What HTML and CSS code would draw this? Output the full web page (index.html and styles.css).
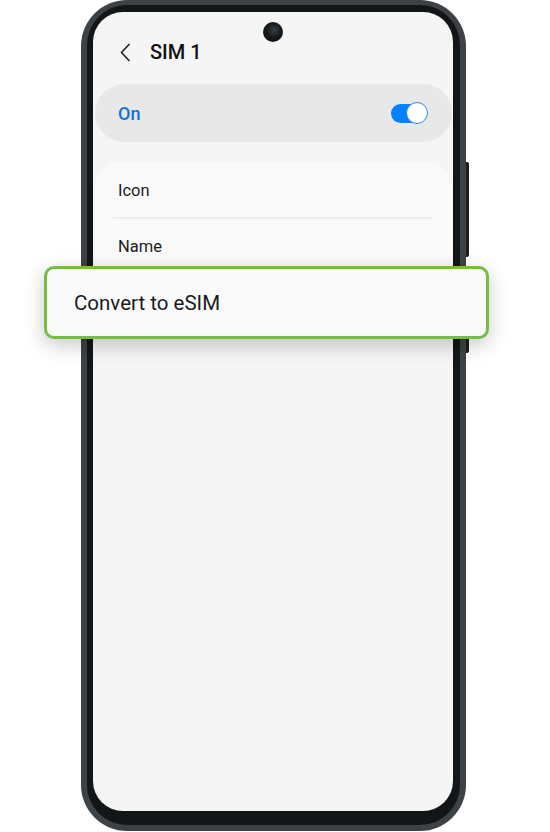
FILE: index.html
```html
<!DOCTYPE html>
<html lang="en">
  <head>
    <meta charset="utf-8">
    <title>SIM 1</title>
    <link rel="stylesheet" href="styles.css">
  </head>
  <body>
    <div class="stage">
      <div class="phone">
        <span class="key key-volume"></span>
        <span class="key key-power"></span>
        <div class="bezel">
          <div class="screen">
            <span class="camera"></span>

            <div class="header">
              <svg class="back" width="12" height="19" viewBox="0 0 12 19">
                <path d="M10 1.5 L2.5 9.5 L10 17.5" fill="none" stroke="#222" stroke-width="1.7" stroke-linecap="round" stroke-linejoin="round"/>
              </svg>
              <span class="title">SIM 1</span>
            </div>

            <div class="switch-row">
              <span class="switch-label">On</span>
              <span class="toggle"><span class="thumb"></span></span>
            </div>

            <!-- third row sits under the callout -->
            <div class="card">
              <div class="row">Icon</div>
              <div class="divider"></div>
              <div class="row">Name</div>
            </div>
          </div>
        </div>
      </div>

      <div class="callout">Convert to eSIM</div>
    </div>
  </body>
</html>
```

FILE: styles.css
```css
body
{
	margin: 0;
	background: #FFF;
	font-family: Roboto, "Noto Sans", Arial, sans-serif;
	color: #1E1E1E;
}
.stage
{
	position: relative;
	width: 550px;
	height: 832px;
	display: flex;
	padding-left: 81px;
	box-sizing: border-box;
}
.phone
{
	position: relative;
	width: 385px;
	height: 831px;
	box-sizing: border-box;
	padding: 5px 6px 6px 6px;
	background: #3C4245;
	border-radius: 46px;
}
.key
{
	position: absolute;
	right: -3px;
	width: 3px;
	background: #1B1F20;
	border-radius: 0 2px 2px 0;
}
.key-volume
{
	top: 162px;
	height: 95px;
}
.key-power
{
	top: 276px;
	height: 77px;
}
.bezel
{
	height: 100%;
	box-sizing: border-box;
	padding: 7px 7px 14px 6px;
	background: #121617;
	border-radius: 40px;
}
.screen
{
	position: relative;
	height: 100%;
	background: #F5F5F5;
	border-radius: 30px;
	overflow: hidden;
}
.camera
{
	position: absolute;
	top: 10px;
	left: 170px;
	width: 20px;
	height: 20px;
	border-radius: 50%;
	background: radial-gradient(circle at 55% 40%, #3A3F44 0, #15191B 45%, #0B0D0E 100%);
}
.header
{
	display: flex;
	align-items: center;
	height: 24px;
	padding: 28px 0 0 26px;
	margin-bottom: 20px;
}
.back
{
	display: block;
}
.title
{
	margin-left: 19px;
	font-size: 20px;
	font-weight: 500;
	color: #111;
}
.switch-row
{
	display: flex;
	align-items: center;
	justify-content: space-between;
	height: 58px;
	margin: 0 1px 0 2px;
	padding: 0 25px 0 23px;
	background: #E8E8E8;
	border-radius: 29px;
}
.switch-label
{
	font-size: 18px;
	font-weight: 500;
	color: #0A74D6;
}
.toggle
{
	position: relative;
	width: 36px;
	height: 19px;
	background: #0381FE;
	border-radius: 10px;
}
.thumb
{
	position: absolute;
	right: -1px;
	top: -2px;
	width: 20px;
	height: 20px;
	background: #FFF;
	border: 1.5px solid #2A8CF0;
	border-radius: 50%;
}
.card
{
	margin: 20px 1px 0 2px;
	padding-bottom: 56px;
	background: #FAFAFA;
	border-radius: 26px;
}
.row
{
	display: flex;
	align-items: center;
	height: 56px;
	padding-left: 23px;
	font-size: 16.5px;
	color: #1A1A1A;
}
.divider
{
	height: 2px;
	margin: -1px 19px -1px 18px;
	background: #EEE;
}
.callout
{
	position: absolute;
	left: 44px;
	top: 266px;
	width: 445px;
	height: 73px;
	box-sizing: border-box;
	display: flex;
	align-items: center;
	padding-left: 27px;
	background: #FAFAFA;
	border: 3px solid #76BE43;
	border-radius: 10px;
	box-shadow: 0 6px 20px rgba(0, 0, 0, 0.22);
	font-size: 20.5px;
	color: #1A1A1A;
}
```
